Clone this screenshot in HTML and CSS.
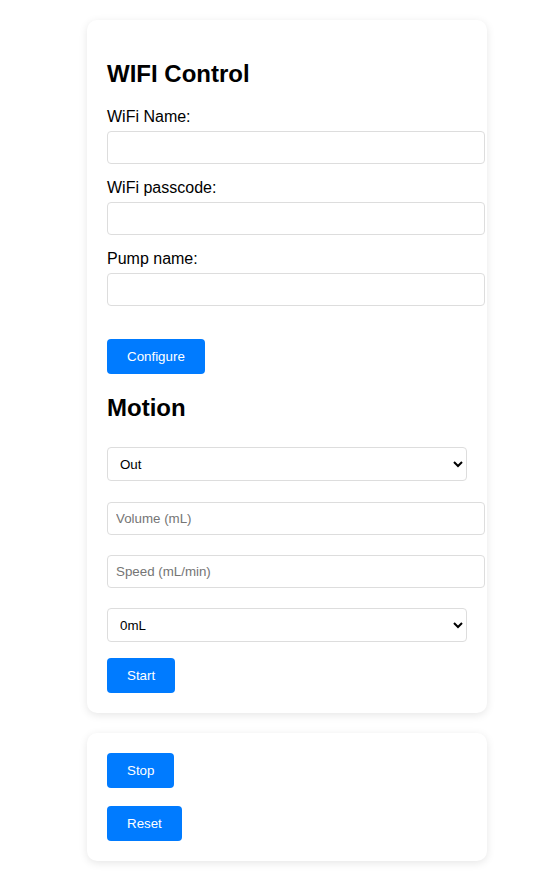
FILE: index.html
```html
<!DOCTYPE html>
<html>
<head>
<meta charset="utf-8">
<link rel="stylesheet" href="styles.css">
</head>
<body>
<div class="page">
  <div class="card">
    <h2 class="title">WIFI Control</h2>
    <label class="label">WiFi Name:</label>
    <input class="field" type="text">
    <label class="label">WiFi passcode:</label>
    <input class="field" type="text">
    <label class="label">Pump name:</label>
    <input class="field" type="text">
    <button class="btn btn-configure">Configure</button>
    <h2 class="title">Motion</h2>
    <select class="select select-dir"><option>Out</option><option>In</option></select>
    <input class="field field-motion" type="text" placeholder="Volume (mL)">
    <input class="field field-motion" type="text" placeholder="Speed (mL/min)">
    <select class="select select-vol"><option>0mL</option></select>
    <button class="btn btn-start">Start</button>
  </div>
  <div class="card card-small">
    <button class="btn btn-stop">Stop</button>
    <button class="btn btn-reset">Reset</button>
  </div>
</div>
</body>
</html>
```
FILE: styles.css
```css
html, body {
  margin: 0;
  padding: 0;
  background: #fff;
  font-family: "Liberation Sans", Arial, sans-serif;
}
.page {
  width: 400px;
  margin: 20px 0 0 87px;
}
.card {
  background: #fff;
  border-radius: 10px;
  box-shadow: 0 2px 8px rgba(0, 0, 0, 0.1);
  padding: 20px;
  margin-bottom: 20px;
  box-sizing: border-box;
  width: 400px;
}
.title {
  font-size: 24px;
  font-weight: bold;
  margin: 20px 0;
  line-height: 28px;
  color: #000;
}
.label {
  display: block;
  font-size: 16px;
  line-height: 18px;
  margin-bottom: 5px;
  color: #000;
}
.field {
  display: block;
  width: 100%;
  padding: 8px;
  font-family: "Liberation Sans", Arial, sans-serif;
  font-size: 13.333px;
  line-height: 15px;
  border: 1px solid #ddd;
  border-radius: 4px;
  margin: 0 0 15px 0;
  background: #fff;
}
.field::placeholder {
  color: #757575;
}
.field-motion {
  margin: 0 0 20px 0;
}
.select {
  display: block;
  width: 100%;
  height: 34px;
  padding: 0 8px;
  font-family: "Liberation Sans", Arial, sans-serif;
  font-size: 13.333px;
  border: 1px solid #ddd;
  border-radius: 4px;
  background: #fff;
  color: #000;
}
.select-dir {
  margin: 25px 0 21px 0;
}
.select-vol {
  margin: 0 0 16px 0;
}
.btn {
  display: block;
  background: #007bff;
  color: #fff;
  border: none;
  border-radius: 4px;
  padding: 10px 20px;
  font-family: "Liberation Sans", Arial, sans-serif;
  font-size: 13.333px;
  line-height: 15px;
  cursor: pointer;
}
.btn-configure {
  margin-top: 33px;
}
.btn-stop {
  margin-bottom: 18px;
}
```
